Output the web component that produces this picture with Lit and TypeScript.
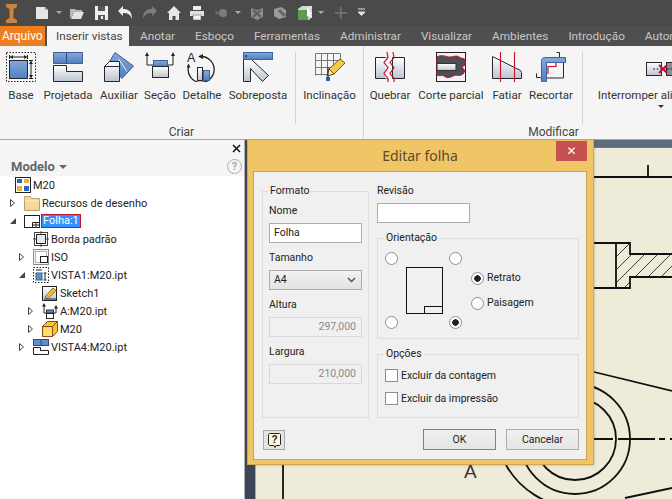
import { LitElement, html, css, svg } from 'lit';
import { customElement } from 'lit/decorators.js';

const INK = '#26262c';
const RED = '#c8102e';

// ribbon icons, 30x30
const ribbonIcons: Record<string, unknown> = {
  base: svg`
    <rect x="0.500" y="0.500" width="29" height="29" fill="none" stroke="#222" stroke-dasharray="1.500 1.500"/>
    <rect x="3.500" y="8.500" width="18" height="18" fill="url(#blue)" stroke="${INK}"/>
    <path d="M3.500 3v4M21.500 3v4M4 5h17M23 8.500h4M23 26.500h4M25 9v17" stroke="#222" fill="none"/>
    <path d="M4 5l3-2v4zM21 5l-3-2v4zM25 9l-2 3h4zM25 26l-2-3h4z" fill="#222"/>`,
  projetada: svg`
    <path d="M0.500 0.500h29v11h-29z" fill="url(#blue)" stroke="#3d6298"/>
    <path d="M13.500 0.500v11" stroke="#2f4a78"/>
    <path d="M0.500 13.500h13v6h16v10h-29z" fill="url(#pale)" stroke="${INK}"/>`,
  auxiliar: svg`
    <path d="M11 0.500L29.500 14 18 26.500 4 12z" fill="url(#blue)" stroke="#3d6298"/>
    <path d="M14.500 7L23 19.500" stroke="#f0f4fa"/>
    <path d="M0.500 14.500l5-5h10v20h-15z" fill="url(#pale)" stroke="${INK}"/>
    <path d="M0.500 14.500h15" stroke="${INK}"/>`,
  secao: svg`
    <path d="M2 3v10h26V3" fill="none" stroke="#222"/>
    <path d="M2 0l-2 4h4zM28 0l-2 4h4z" fill="#222"/>
    <rect x="8.500" y="8.500" width="14" height="6" fill="url(#blue)" stroke="#3d6298"/>
    <rect x="7.500" y="14.500" width="16" height="11" fill="url(#pale)" stroke="${INK}"/>`,
  detalhe: svg`
    <path d="M14 4.500a13 13 0 1 1-12.500 10" fill="none" stroke="#222" stroke-width="1.300"/>
    <path d="M11 4.500l5-2.500v5zM1.500 11.500l-2 4h4z" fill="#222"/>
    <text x="0" y="10" font-family="Liberation Sans, sans-serif" font-size="12.500" fill="#222">A</text>
    <rect x="10.500" y="15.500" width="5" height="13" fill="url(#pale)" stroke="${INK}"/>
    <rect x="16.500" y="18.500" width="6" height="10" fill="url(#blue)" stroke="#3d6298"/>`,
  sobreposta: svg`
    <path d="M0.500 7.500h8l17 16-6 6-12-13v13h-7z" fill="url(#pale)" stroke="${INK}"/>
    <rect x="0.500" y="0.500" width="29" height="7" fill="url(#blue)" stroke="#3d6298"/>
    <circle cx="3" cy="4" r="1" fill="#1b2b50"/>`,
  inclinacao: svg`
    <path d="M0.500 1.500h25M0.500 8.500h25M0.500 15.500h15M0.500 22.500h12M0.500 1.500v22M6.500 1.500v22M12.500 1.500v22M18.500 1.500v14M25.500 1.500v11" stroke="#777" fill="none"/>
    <path d="M12 24l2-7L25 7l5 4-11 11z" fill="#f4c945" stroke="#7a5a10"/>
    <path d="M12 24l2-7 5 5z" fill="#fbeec0" stroke="#7a5a10"/>
    <rect x="11" y="25" width="4" height="4" fill="#2a5fb0"/>
    <path d="M13 15v10" stroke="#222"/>`,
  quebrar: svg`
    <path d="M0.500 5.500h12v21h-12zM29.500 5.500h-12v21h12z" fill="url(#pale)" stroke="${INK}"/>
    <path d="M10 5.500h6v21h-6z" fill="#f5f5f5"/>
    <path d="M12 0l1 5.500-4 5 4 5-4 6 4 5v5M18 0l1 5.500-4 5 4 5-4 6 4 5v5" fill="none" stroke="${RED}" stroke-width="1.200"/>`,
  corte: svg`
    <rect x="0.500" y="0.500" width="29" height="29" fill="#f2f2f2" stroke="#222"/>
    <path d="M1 5c5-3 9 0 13 0s6-2 9 0 6 1 6 3v5l-3 2 3 4-2 3c-4 3-7 0-10 2s-7 2-9 0-4 1-7-1z" fill="#4c4f55" stroke="${RED}"/>
    <rect x="1" y="11.500" width="19" height="7" fill="url(#pale)" stroke="#333"/>`,
  fatiar: svg`
    <path d="M0.500 4.500l28 14 1 2v6h-29z" fill="url(#pale)" stroke="${INK}"/>
    <path d="M8.500 0v30M22.500 0v30" stroke="${RED}" stroke-width="1.100"/>`,
  recortar: svg`
    <path d="M20.500 0.500h3v5M0.500 21.500v4h4M27.500 9v17h-23" fill="none" stroke="${INK}"/>
    <path d="M12 22V14.500h8V5" fill="none" stroke="${RED}" stroke-width="1.200"/>
    <path d="M5.500 30V9.500c0-3 1-4 4-4h20v5h-19V30z" fill="url(#blue)" stroke="#3d6298"/>`,
  interromper: svg`
    <rect x="0.500" y="10.500" width="15" height="13" fill="url(#pale)" stroke="${INK}"/>
    <rect x="20.500" y="10.500" width="15" height="13" fill="#8a8f96" stroke="${INK}"/>
    <path d="M7 17h22" stroke="#222" stroke-dasharray="2 1.500"/>
    <path d="M13 13l8 8M21 13l-8 8" stroke="${RED}" stroke-width="2"/>`,
};

// browser tree icons, 16x16
const treeIcons: Record<string, unknown> = {
  asm: svg`
    <rect x="0.500" y="0.500" width="15" height="15" fill="#fff" stroke="#222"/>
    <rect x="2" y="2" width="5" height="4" fill="#2b63b5"/><rect x="9" y="2" width="5" height="4" fill="#e8b23a"/>
    <rect x="2" y="9" width="5" height="5" fill="#e8b23a"/><rect x="9" y="9" width="5" height="5" fill="#2b63b5"/>`,
  folder: svg`
    <path d="M0.500 3.500V1.500h6l1 2h8v12h-15z" fill="#f3d79c" stroke="#bfa06a"/>
    <path d="M1 6h14" stroke="#fbeccb"/>`,
  sheet: svg`
    <rect x="0.500" y="2.500" width="15" height="12" fill="#fff" stroke="#222"/>
    <path d="M8.500 14V9.500H15.500M8.500 12H15.500M12 9.500V14" stroke="#222" fill="none"/>`,
  border: svg`
    <rect x="1.500" y="1.500" width="13" height="13" fill="#fff" stroke="#444"/>
    <rect x="3.500" y="3.500" width="9" height="9" fill="#e4eaf2" stroke="#222"/>
    <path d="M0 8h3M13 8h3M8 0v3M8 13v3" stroke="#444"/>`,
  iso: svg`
    <rect x="0.500" y="0.500" width="15" height="15" fill="#f4f4f4" stroke="#8a8a8a"/>
    <rect x="2.500" y="2.500" width="11" height="11" fill="#fff" stroke="#b4b4b4"/>
    <rect x="7.500" y="7.500" width="7" height="6" fill="#fff" stroke="#222"/>`,
  vista: svg`
    <rect x="0.500" y="0.500" width="15" height="15" fill="#fff" stroke="#222" stroke-dasharray="1.500 1.500"/>
    <rect x="3" y="6" width="6" height="7" fill="#5f8fc8" stroke="#3d6298"/>
    <path d="M3 3h6M12 6v7M10.500 6h3M10.500 13h3" stroke="#222"/>`,
  sketch: svg`
    <rect x="0.500" y="1.500" width="14" height="14" fill="url(#pale)" stroke="#222"/>
    <path d="M3 12L11 3l3 2.500-8 8z" fill="#f0c040" stroke="#8a6a10"/>
    <path d="M2 14L14 14" stroke="#3d6298" stroke-width="1.500"/>`,
  section: svg`
    <path d="M2 3v7h12V5" fill="none" stroke="#222"/>
    <path d="M2 0L0 3.500h4zM14 2l-2 3.500h4z" fill="#222"/>
    <rect x="4.500" y="7" width="7" height="3" fill="#5f8fc8" stroke="#333"/>
    <rect x="4.500" y="10.500" width="7" height="5" fill="#fff" stroke="#222"/>`,
  part: svg`
    <path d="M0.500 5.500l5-5h10v10l-5 5h-10z" fill="#f5c52e" stroke="#8a4a12"/>
    <path d="M0.500 5.500h10v10M10.500 5.500l5-5" fill="none" stroke="#8a4a12"/>
    <path d="M1.500 6.500h8.500v8.500h-8.500z" fill="#ffdf6a"/>`,
  proj: svg`
    <rect x="0.500" y="0.500" width="15" height="6" fill="#5f8fc8" stroke="#2f4a78"/>
    <path d="M8 0.500v6" stroke="#2f4a78"/>
    <path d="M0.500 8.500h7v3h8v4h-15z" fill="#fff" stroke="#222"/>`,
};

// quick access toolbar, 14x14
const qatIcons: Record<string, unknown> = {
  doc: svg`<path d="M1 1h9l3 3v9H1z" fill="#e6e6e6"/><path d="M10 1v3h3z" fill="#9a9a9a"/>`,
  open: svg`<path d="M0 3h5l1 1h6v2H4L1 12H0z" fill="#b8b8b8"/><path d="M4 6h10l-3 7H1z" fill="#e2e2e2"/>`,
  save: svg`<path d="M0 0h13v14H0z" fill="#eee"/><rect x="3" y="0" width="7" height="5" fill="#555"/><rect x="3" y="9" width="7" height="5" fill="#555"/><rect x="6" y="10" width="2" height="3" fill="#eee"/>`,
  undo: svg`<path d="M0 5l5-5v3c5 0 9 2 9 10-2-5-4-6-9-6v3z" fill="#eee"/>`,
  redo: svg`<path d="M14 5L9 0v3C4 3 0 5 0 13c2-5 4-6 9-6v3z" fill="#7c7c7c"/>`,
  home: svg`<path d="M7 0l7 7h-2v7H8.500v-4h-3v4H2V7H0z" fill="#e8e8e8"/>`,
  print: svg`<rect x="3" y="0" width="8" height="4" fill="#eee"/><rect x="0" y="5" width="14" height="5" fill="#e0e0e0"/><rect x="3" y="9" width="8" height="5" fill="#f4f4f4" stroke="#555" stroke-width="0.500"/>`,
  dot: svg`<circle cx="9" cy="7" r="4" fill="#7c7c7c"/><circle cx="3" cy="7" r="2" fill="#666"/>`,
  cubes: svg`<path d="M1 2l6 2 6-2v9l-6 3-6-3z" fill="#8c8c8c"/><path d="M3 4l8 7M11 4l-8 7" stroke="#5c5c5c" stroke-width="2"/>`,
  cubes2: svg`<path d="M1 3l7-2 5 3v7l-7 2-5-3z" fill="#9a9a9a"/><path d="M6 4l6 6" stroke="#666" stroke-width="3"/>`,
  box: svg`<path d="M0 3l4-3h10v11l-3 3H0z" fill="#d6d6d6"/><rect x="0" y="4" width="10" height="10" fill="#5f9a52"/><path d="M10 4l4-4" stroke="#eee"/><path d="M9 1v10l2-2 2 3 1-1-2-3h2z" fill="#fff"/>`,
  plus: svg`<path d="M7 1v12M1 7h12" stroke="#777" stroke-width="1.500"/>`,
};

const qatItems = [
  ['doc', 35], ['open', 70], ['save', 95], ['undo', 118], ['redo', 143], ['home', 167],
  ['print', 190], ['dot', 214], ['cubes', 250], ['cubes2', 273], ['box', 298], ['plus', 334],
] as const;

const tabs = ['Anotar', 'Esboço', 'Ferramentas', 'Administrar', 'Visualizar', 'Ambientes', 'Introdução', 'Automação'];

const tree = [
  { icon: 'asm', label: 'M20', level: 0, arrow: '' },
  { icon: 'folder', label: 'Recursos de desenho', level: 1, arrow: 'closed' },
  { icon: 'sheet', label: 'Folha:1', level: 1, arrow: 'open', selected: true },
  { icon: 'border', label: 'Borda padrão', level: 2, arrow: '' },
  { icon: 'iso', label: 'ISO', level: 2, arrow: 'closed' },
  { icon: 'vista', label: 'VISTA1:M20.ipt', level: 2, arrow: 'open' },
  { icon: 'sketch', label: 'Sketch1', level: 3, arrow: '' },
  { icon: 'section', label: 'A:M20.ipt', level: 3, arrow: 'closed' },
  { icon: 'part', label: 'M20', level: 3, arrow: 'closed' },
  { icon: 'proj', label: 'VISTA4:M20.ipt', level: 2, arrow: 'closed' },
];

const hatch = Array.from({ length: 15 }, (_, i) => 560 + i * 13);

@customElement('app-root')
export class AppRoot extends LitElement {
  static styles = css`
    :host {
      display: block;
      width: 672px;
      height: 499px;
      overflow: hidden;
      font-family: Roboto, 'Noto Sans', sans-serif;
      font-size: 10.500px;
      color: #222;
      background: #f5f5f5;
    }
    .defs {
      position: absolute;
      width: 0;
      height: 0;
    }

    /* title bar + tabs */
    .qat {
      position: relative;
      height: 26px;
      background: #4a4a4a;
    }
    .logo {
      position: absolute;
      left: 6px;
      top: 4px;
    }
    .qat-icon {
      position: absolute;
      top: 6px;
    }
    .caret {
      position: absolute;
      top: 11px;
      width: 0;
      height: 0;
      border-left: 3px solid transparent;
      border-right: 3px solid transparent;
      border-top: 3px solid #aaa;
    }
    .tabs {
      display: flex;
      height: 20px;
      background: #4f4f4f;
      color: #c6c6c6;
      font-size: 11.750px;
      line-height: 20px;
      white-space: nowrap;
      overflow: hidden;
    }
    .tabs > span {
      flex: none;
    }
    .tab-file {
      width: 45px;
      margin-right: 2px;
      padding-left: 2px;
      box-sizing: border-box;
      background: #ee7f1f;
      color: #fff;
      font-size: 12px;
    }
    .tab-active {
      width: 82px;
      margin-right: 11px;
      padding-left: 9px;
      box-sizing: border-box;
      background: #f5f5f5;
      color: #444;
    }
    .tab {
      margin-right: 20px;
    }

    /* ribbon */
    .ribbon {
      display: flex;
      height: 94px;
      background: #f5f5f5;
      border-bottom: 1px solid #a8a8a8;
      box-sizing: border-box;
      overflow: hidden;
    }
    .panel {
      flex: none;
      display: flex;
      flex-direction: column;
      border-right: 1px solid #d4d4d4;
      box-sizing: border-box;
    }
    .panel-criar {
      width: 364px;
    }
    .panel-mod {
      width: 380px;
    }
    .tools {
      display: flex;
      height: 78px;
      padding-top: 6px;
      box-sizing: border-box;
    }
    .tool {
      flex: none;
      display: flex;
      flex-direction: column;
      align-items: center;
      color: #333;
      font-size: 11.500px;
      line-height: 16px;
      white-space: nowrap;
    }
    .tool svg {
      margin-bottom: 5px;
    }
    .more {
      width: 0;
      height: 0;
      margin-top: 2px;
      border-left: 3px solid transparent;
      border-right: 3px solid transparent;
      border-top: 3px solid #333;
    }
    .sep {
      flex: none;
      width: 1px;
      height: 72px;
      background: #d4d4d4;
    }
    .sep-a {
      margin-left: 7px;
    }
    .sep-b {
      margin-left: 8px;
    }
    .panel-name {
      text-align: center;
      color: #444;
      font-size: 12px;
      line-height: 16px;
    }

    /* lower area */
    .main {
      display: flex;
      height: 359px;
    }
    .browser {
      flex: none;
      width: 245px;
      display: flex;
      flex-direction: column;
      border-right: 1px solid #b0b0b0;
      box-sizing: border-box;
    }
    .browser-head {
      position: relative;
      flex: none;
      display: flex;
      align-items: center;
      justify-content: space-between;
      height: 36px;
      padding: 16px 1px 0 11px;
      box-sizing: border-box;
      color: #666;
      font-size: 13px;
      font-weight: 700;
    }
    .browser-close {
      position: absolute;
      right: 3px;
      top: 4px;
    }
    .modelo::after {
      content: '';
      display: inline-block;
      margin-left: 4px;
      vertical-align: 2px;
      border-left: 4px solid transparent;
      border-right: 4px solid transparent;
      border-top: 4px solid #666;
    }
    .help-circle {
      width: 13px;
      height: 13px;
      border: 1px solid #aaa;
      border-radius: 50%;
      color: #aaa;
      font-size: 11px;
      line-height: 13px;
      text-align: center;
      margin-right: 1px;
    }
    .tree {
      flex: 1;
      background: #fff;
    }
    .row {
      display: flex;
      align-items: center;
      height: 18px;
      color: #222;
      font-size: 11px;
      white-space: nowrap;
    }
    .arrow {
      flex: none;
      display: block;
      width: 15px;
      height: 8px;
    }
    .row .icon {
      flex: none;
      margin-right: 2px;
    }
    .selected {
      background: #3390ff;
      color: #fff;
      outline: 1px solid #c8102e;
      padding: 0 1px;
      line-height: 12px;
    }

    /* drawing sheet */
    .sheet {
      position: relative;
      flex: 1;
      background: #eeecd9;
      overflow: hidden;
    }
    .sheet > svg {
      display: block;
    }

    /* dialog */
    .dialog {
      position: absolute;
      left: 2px;
      top: 0;
      width: 347px;
      height: 325px;
      box-sizing: border-box;
      display: flex;
      flex-direction: column;
      padding: 0 6px 6px 5px;
      background: #f0c566;
      border: 1px solid #d2a64e;
      border-top-color: #e6bd62;
      box-shadow: 0 0 3px rgba(80, 70, 40, 0.35);
    }
    .dialog-title {
      flex: none;
      display: grid;
      grid-template-columns: 1fr auto 1fr;
      height: 30px;
      color: #5c4a2a;
      font-family: 'Noto Sans', sans-serif;
      font-size: 14px;
      line-height: 30px;
    }
    .close {
      grid-column: 3;
      justify-self: end;
      width: 31px;
      height: 20px;
      background: #c75050;
      color: #fff;
      font-family: 'DejaVu Sans', sans-serif;
      font-size: 12px;
      font-weight: 700;
      line-height: 20px;
      text-align: center;
    }
    .body {
      flex: 1;
      display: flex;
      flex-direction: column;
      padding: 12px 7px 9px 8px;
      background: #f0f0f0;
      border: 1px solid #c9a655;
      box-sizing: border-box;
    }
    .columns {
      display: flex;
      gap: 8px;
      height: 234px;
    }
    fieldset {
      margin: 0;
      padding: 0 7px;
      border: 1px solid #dcdcdc;
      min-width: 0;
      box-sizing: border-box;
    }
    legend {
      padding: 0 2px;
      margin-left: -1px;
      font-size: 10.500px;
      line-height: 14px;
      color: #222;
    }
    .fmt {
      width: 107px;
      padding: 0 6px;
    }
    .fmt .inner {
      display: flex;
      flex-direction: column;
      gap: 8px;
      margin-top: 6px;
    }
    .field {
      display: flex;
      flex-direction: column;
      gap: 5px;
    }
    .label {
      line-height: 14px;
    }
    .input {
      height: 20px;
      box-sizing: border-box;
      padding: 0 4px;
      background: #fff;
      border: 1px solid #acacac;
      line-height: 18px;
    }
    .input.off {
      background: #f0f0f0;
      border-color: #d9d9d9;
      color: #8a8a8a;
      text-align: right;
      padding-right: 5px;
    }
    .select {
      display: flex;
      align-items: center;
      justify-content: space-between;
      background: linear-gradient(#f1f1f1, #e3e3e3);
      padding: 0 5px 0 4px;
    }
    .col-right {
      flex: 1;
      display: flex;
      flex-direction: column;
      gap: 8px;
    }
    .rev {
      width: 93px;
    }
    .orient {
      height: 108px;
    }
    .orient-grid {
      display: grid;
      grid-template-columns: 13px 51px 13px auto;
      grid-template-rows: 13px 47px 13px;
      row-gap: 2px;
      margin-top: 7px;
      align-items: center;
    }
    .page {
      position: relative;
      grid-column: 2;
      grid-row: 2;
      width: 37px;
      height: 47px;
      margin-left: 8px;
      box-sizing: border-box;
      border: 1px solid #111;
      background: #f0f0f0;
    }
    .page i {
      position: absolute;
      right: 0;
      bottom: 0;
      width: 18px;
      height: 7px;
      box-sizing: border-box;
      border-left: 1px solid #111;
      border-top: 1px solid #111;
    }
    .modes {
      grid-column: 4;
      grid-row: 2;
      display: flex;
      flex-direction: column;
      gap: 11px;
      margin-left: 9px;
    }
    .mode {
      display: flex;
      align-items: center;
      gap: 3px;
      line-height: 14px;
    }
    .radio {
      display: block;
      flex: none;
      width: 13px;
      height: 13px;
      box-sizing: border-box;
      border: 1px solid #8e8e8e;
      border-radius: 50%;
      background: #fff;
    }
    .radio.on {
      background: radial-gradient(circle, #222 0 3px, #fff 3.500px);
    }
    .tr {
      grid-column: 3;
    }
    .tr2 {
      grid-column: 3;
      grid-row: 3;
    }
    .bl {
      grid-column: 1;
      grid-row: 3;
    }
    .opts {
      flex: 1;
    }
    .checks {
      display: flex;
      flex-direction: column;
      gap: 10px;
      margin-top: 8px;
    }
    .check {
      display: flex;
      align-items: center;
      gap: 3px;
      line-height: 13px;
    }
    .box {
      flex: none;
      width: 13px;
      height: 13px;
      box-sizing: border-box;
      background: #fff;
      border: 1px solid #8e8e8e;
    }
    .footer {
      display: flex;
      align-items: center;
      gap: 10px;
      margin-top: 11px;
      height: 21px;
    }
    .help-btn {
      display: flex;
      align-items: center;
      justify-content: center;
      width: 22px;
      height: 20px;
      margin-left: 1px;
      margin-right: auto;
      box-sizing: border-box;
      border: 1px solid #aaa;
      background: #e4e4e4;
    }
    .btn {
      width: 73px;
      height: 21px;
      box-sizing: border-box;
      border: 1px solid #acacac;
      background: linear-gradient(#f0f0f0, #e5e5e5);
      line-height: 19px;
      text-align: center;
    }
    .btn.default {
      border-color: #4a8fd6;
    }
  `;

  private renderTool(label: string, icon: string, width: number, more = false) {
    return html`
      <div class="tool" style="width:${width}px">
        <svg width="30" height="30" viewBox="0 0 30 30">${ribbonIcons[icon]}</svg>
        <span>${label}</span>
        ${more ? html`<span class="more"></span>` : ''}
      </div>
    `;
  }

  private renderQat() {
    return html`
      <div class="qat">
        <svg class="logo" width="11" height="19" viewBox="0 0 11 19">
          <path d="M0 0h11v3L7.500 5v9l3.500 2v3H0v-3l3.500-2V5L0 3z" fill="#c9853f"/>
        </svg>
        ${qatItems.map(
          ([name, x]) => html`<svg class="qat-icon" style="left:${x}px" width="14" height="14" viewBox="0 0 14 14">${qatIcons[name]}</svg>`,
        )}
        ${[56, 235, 318].map((x) => html`<span class="caret" style="left:${x}px"></span>`)}
        <svg class="qat-icon" style="left:357px" width="10" height="14" viewBox="0 0 10 14">
          <path d="M1 3h7M1 6h7l-3.500 3.500z" stroke="#ddd" fill="#ddd"/>
        </svg>
      </div>
    `;
  }

  private renderRibbon() {
    return html`
      <div class="ribbon">
        <div class="panel panel-criar">
          <div class="tools">
            ${this.renderTool('Base', 'base', 42)}
            ${this.renderTool('Projetada', 'projetada', 52)}
            ${this.renderTool('Auxiliar', 'auxiliar', 50)}
            ${this.renderTool('Seção', 'secao', 32)}
            ${this.renderTool('Detalhe', 'detalhe', 52)}
            ${this.renderTool('Sobreposta', 'sobreposta', 60)}
            <span class="sep sep-a"></span>
            ${this.renderTool('Inclinação', 'inclinacao', 67)}
          </div>
          <div class="panel-name">Criar</div>
        </div>
        <div class="panel panel-mod">
          <div class="tools">
            ${this.renderTool('Quebrar', 'quebrar', 52)}
            ${this.renderTool('Corte parcial', 'corte', 70)}
            ${this.renderTool('Fatiar', 'fatiar', 42)}
            ${this.renderTool('Recortar', 'recortar', 46)}
            <span class="sep sep-b"></span>
            ${this.renderTool('Interromper alinhamento', 'interromper', 156, true)}
          </div>
          <div class="panel-name">Modificar</div>
        </div>
      </div>
    `;
  }

  private renderBrowser() {
    return html`
      <aside class="browser">
        <div class="browser-head">
          <svg class="browser-close" width="9" height="9" viewBox="0 0 9 9">
            <path d="M1 1l7 7M8 1L1 8" stroke="#111" stroke-width="1.500"/>
          </svg>
          <span class="modelo">Modelo</span>
          <span class="help-circle">?</span>
        </div>
        <div class="tree">
          ${tree.map(
            (n) => html`
              <div class="row" style="padding-left:${n.level * 9}px">
                <svg class="arrow" viewBox="0 0 15 8">
                  ${n.arrow === 'closed' ? svg`<path d="M1.500 0.500l4 3.500-4 3.500z" fill="#fff" stroke="#444"/>` : ''}
                  ${n.arrow === 'open' ? svg`<path d="M7 1v6H1z" fill="#444"/>` : ''}
                </svg>
                <svg class="icon" width="16" height="16" viewBox="0 0 16 16">${treeIcons[n.icon]}</svg>
                <span class="${n.selected ? 'selected' : ''}">${n.label}</span>
              </div>
            `,
          )}
        </div>
      </aside>
    `;
  }

  // drawing coordinates are the page's own, shifted by the sheet origin
  private renderDrawing() {
    return html`
      <svg width="427" height="359" viewBox="245 140 427 359">
        <defs>
          <clipPath id="arm"><path d="M616 243h14v11h42v23h-42v11h-14z"/></clipPath>
        </defs>
        <rect x="245" y="140" width="427" height="7" fill="#5c6b7d"/>
        <rect x="245" y="147" width="427" height="1" fill="#5e8a66"/>
        <rect x="245" y="140" width="10" height="359" fill="#3c4656"/>
        <rect x="255" y="140" width="1" height="359" fill="#7fc47a"/>
        <g fill="none" stroke="#111" stroke-width="0.800" clip-path="url(#arm)">
          ${hatch.map((x) => svg`<path d="M${x} 300L${x + 60} 240"/>`)}
        </g>
        <g fill="none" stroke="#111" stroke-width="1.800">
          <path d="M590 177H672M648 165V177"/>
          <path d="M590 243H630V254H672M672 277H630V288H590M616 243V288"/>
          <path d="M590 371L672 391M625 498L672 488"/>
          <circle cx="575" cy="439" r="55"/>
          <circle cx="575" cy="439" r="41"/>
          <path d="M506 465C520 490 545 505 575 509"/>
          <path d="M590 439H613M618 439H655M659 439H665M670 439H672"/>
          <path d="M283 460V499"/>
        </g>
        <text x="464" y="478" font-family="Liberation Sans, sans-serif" font-size="19" fill="#333">A</text>
      </svg>
    `;
  }

  private renderDialog() {
    return html`
      <section class="dialog">
        <div class="dialog-title">
          <span style="grid-column:2">Editar folha</span>
          <span class="close">✕</span>
        </div>
        <div class="body">
          <div class="columns">
            <fieldset class="fmt">
              <legend>Formato</legend>
              <div class="inner">
                <div class="field"><span class="label">Nome</span><div class="input">Folha</div></div>
                <div class="field">
                  <span class="label">Tamanho</span>
                  <div class="input select">
                    <span>A4</span>
                    <svg width="9" height="6" viewBox="0 0 9 6"><path d="M1 1l3.500 3.500L8 1" fill="none" stroke="#555" stroke-width="1.500"/></svg>
                  </div>
                </div>
                <div class="field"><span class="label">Altura</span><div class="input off">297,000</div></div>
                <div class="field"><span class="label">Largura</span><div class="input off">210,000</div></div>
              </div>
            </fieldset>
            <div class="col-right">
              <div class="field">
                <span class="label">Revisão</span>
                <div class="input rev"></div>
              </div>
              <fieldset class="orient">
                <legend>Orientação</legend>
                <div class="orient-grid">
                  <span class="radio"></span>
                  <span class="radio tr"></span>
                  <div class="page"><i></i></div>
                  <div class="modes">
                    <div class="mode"><span class="radio on"></span>Retrato</div>
                    <div class="mode"><span class="radio"></span>Paisagem</div>
                  </div>
                  <span class="radio bl"></span>
                  <span class="radio on tr2"></span>
                </div>
              </fieldset>
              <fieldset class="opts">
                <legend>Opções</legend>
                <div class="checks">
                  <div class="check"><span class="box"></span>Excluir da contagem</div>
                  <div class="check"><span class="box"></span>Excluir da impressão</div>
                </div>
              </fieldset>
            </div>
          </div>
          <div class="footer">
            <div class="help-btn">
              <svg width="15" height="16" viewBox="0 0 15 16">
                <path d="M2.500 1.500h10l1 1v10l-1 1H9l-1 2-1-2H2.500l-1-1v-10z" fill="#fff9d8" stroke="#222"/>
                <text x="7.500" y="11" text-anchor="middle" font-family="Liberation Sans, sans-serif" font-size="10" font-weight="700" fill="#222">?</text>
              </svg>
            </div>
            <div class="btn default">OK</div>
            <div class="btn">Cancelar</div>
          </div>
        </div>
      </section>
    `;
  }

  render() {
    return html`
      <svg class="defs">
        <defs>
          <linearGradient id="blue" x1="0" y1="0" x2="0" y2="1">
            <stop offset="0" stop-color="#84a9d8"/><stop offset="1" stop-color="#4f80c0"/>
          </linearGradient>
          <linearGradient id="pale" x1="0" y1="0" x2="0" y2="1">
            <stop offset="0" stop-color="#ffffff"/><stop offset="1" stop-color="#bcc4d0"/>
          </linearGradient>
        </defs>
      </svg>
      ${this.renderQat()}
      <nav class="tabs">
        <span class="tab-file">Arquivo</span>
        <span class="tab-active">Inserir vistas</span>
        ${tabs.map((t) => html`<span class="tab">${t}</span>`)}
      </nav>
      ${this.renderRibbon()}
      <div class="main">
        ${this.renderBrowser()}
        <div class="sheet">
          ${this.renderDrawing()}
          ${this.renderDialog()}
        </div>
      </div>
    `;
  }
}
